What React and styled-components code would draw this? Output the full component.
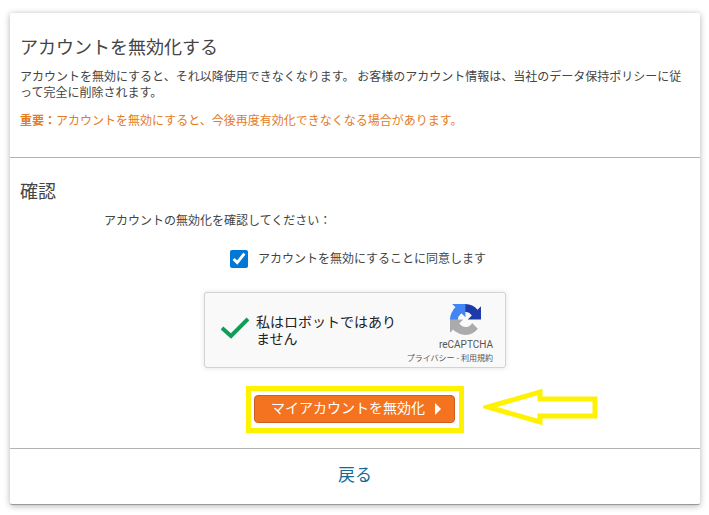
import { useState } from 'react';
import styled, { createGlobalStyle } from 'styled-components';

const App = () => {
  const [agreed, setAgreed] = useState(true);

  return (
    <>
      <GlobalStyle />
      <Card>
        <Section>
          <Title>アカウントを無効化する</Title>
          <Description>
            アカウントを無効にすると、それ以降使用できなくなります。 お客様のアカウント情報は、当社のデータ保持ポリシーに従って完全に削除されます。
          </Description>
          <Warning>
            <strong>重要：</strong>アカウントを無効にすると、今後再度有効化できなくなる場合があります。
          </Warning>
        </Section>
        <ConfirmSection>
          <Title>確認</Title>
          <ConfirmText>アカウントの無効化を確認してください：</ConfirmText>
          <AgreeRow>
            <AgreeCheckbox id="agree" type="checkbox" checked={agreed} onChange={(e) => setAgreed(e.target.checked)} />
            <AgreeLabel htmlFor="agree">アカウントを無効にすることに同意します</AgreeLabel>
          </AgreeRow>
          <Captcha />
          <Highlight>
            <SubmitButton type="button">
              <ButtonText>マイアカウントを無効化</ButtonText>
              <svg width="6" height="12" viewBox="0 0 6 12" aria-hidden="true">
                <path d="M0 0L6 6L0 12Z" fill="#ffffff" />
              </svg>
            </SubmitButton>
            <PointerArrow viewBox="0 0 116 38" aria-hidden="true">
              <path d="M5 19L57 4V11H112V28H57V34Z" fill="none" stroke="#fff200" strokeWidth="5" />
            </PointerArrow>
          </Highlight>
        </ConfirmSection>
        <Footer>
          <BackLink href="#">戻る</BackLink>
        </Footer>
      </Card>
    </>
  );
};

const Captcha = () => (
  <CaptchaBox>
    <CheckMark viewBox="0 0 28 22" aria-hidden="true">
      <path d="M1 11L10 19L27 2" fill="none" stroke="#0f9d58" strokeWidth="4" />
    </CheckMark>
    <CaptchaText>私はロボットではありません</CaptchaText>
    <CaptchaBrand>
      <BrandLogo>
        <svg width="31" height="31" viewBox="0 0 64 64" aria-hidden="true">
          <path
            fill="#1c3aa9"
            d="M64 31.955l-.033-1.37V4.687l-7.16 7.16C50.948 4.674 42.033.093 32.05.093c-10.4 0-19.622 4.96-25.458 12.64l11.736 11.86a15.55 15.55 0 0 1 4.754-5.334c2.05-1.6 4.952-2.906 8.968-2.906.485 0 .86.057 1.135.163 4.976.393 9.288 3.14 11.828 7.124l-8.307 8.307L64 31.953"
          />
          <path
            fill="#4285f4"
            d="M31.862.094l-1.37.033H4.594l7.16 7.16C4.58 13.147 0 22.06 0 32.046c0 10.4 4.96 19.622 12.64 25.458L24.5 45.768a15.55 15.55 0 0 1-5.334-4.754c-1.6-2.05-2.906-4.952-2.906-8.968 0-.485.057-.86.163-1.135.393-4.976 3.14-9.288 7.124-11.828l8.307 8.307L31.86.095"
          />
          <path
            fill="#ababab"
            d="M.001 32.045l.033 1.37v25.898l7.16-7.16c5.86 7.173 14.774 11.754 24.76 11.754 10.4 0 19.622-4.96 25.458-12.64l-11.736-11.86a15.55 15.55 0 0 1-4.754 5.334c-2.05 1.6-4.952 2.906-8.968 2.906-.485 0-.86-.057-1.135-.163-4.976-.393-9.288-3.14-11.828-7.124l8.307-8.307c-10.522.04-22.4.066-27.295-.005"
          />
        </svg>
        <BrandName>reCAPTCHA</BrandName>
      </BrandLogo>
      <BrandLinks>
        <a href="#">プライバシー</a> - <a href="#">利用規約</a>
      </BrandLinks>
    </CaptchaBrand>
  </CaptchaBox>
);

export default App;

const GlobalStyle = createGlobalStyle`
  * {
    box-sizing: border-box;
  }

  body {
    margin: 0;
    background-color: #ffffff;
    color: #444444;
    font-family: 'Noto Sans CJK JP', sans-serif;
    font-size: 12px;
    line-height: 16px;
  }
`;

const Card = styled.main`
  margin: 13px 9px 10px 10px;
  background-color: #ffffff;
  border-bottom: 1px solid #999999;
  border-radius: 2px;
  box-shadow: 0 1px 6px rgba(0, 0, 0, 0.3);
`;

const Section = styled.section`
  padding: 21px 10px 29px;
  border-bottom: 1px solid #b3b3b3;
`;

const ConfirmSection = styled(Section)`
  display: flex;
  flex-direction: column;
  padding-top: 20px;
  padding-bottom: 15px;
`;

const Title = styled.h2`
  margin: 0 0 10px;
  font-weight: 400;
  font-size: 18px;
  line-height: 24px;
`;

const Description = styled.p`
  margin: 0 0 12px;
`;

const Warning = styled.p`
  margin: 0;
  color: #e47b25;
`;

const ConfirmText = styled.p`
  margin: 0 0 22px 84px;
`;

const AgreeRow = styled.div`
  display: flex;
  align-items: flex-start;
  align-self: center;
  gap: 10px;
  padding-left: 6px;
  margin-bottom: 24px;
`;

const AgreeCheckbox = styled.input`
  width: 18px;
  height: 18px;
  margin: 0;
  accent-color: #0078d7;
`;

const AgreeLabel = styled.label`
  line-height: 16px;
`;

const CaptchaBox = styled.div`
  display: flex;
  align-items: center;
  align-self: center;
  width: 302px;
  height: 76px;
  padding: 0 12px 0 16px;
  margin-bottom: 18px;
  background-color: #f9f9f9;
  border: 1px solid #d3d3d3;
  border-radius: 3px;
  box-shadow: 0 0 4px 1px rgba(0, 0, 0, 0.08);
`;

const CheckMark = styled.svg`
  flex: none;
  width: 28px;
  height: 22px;
  margin-bottom: 4px;
`;

const CaptchaText = styled.span`
  width: 142px;
  margin-left: 7px;
  color: #222222;
  font-size: 14px;
  line-height: 17px;
`;

const CaptchaBrand = styled.div`
  display: flex;
  flex-direction: column;
  align-items: flex-end;
  flex: none;
  align-self: flex-end;
  padding-bottom: 3px;
  margin-left: auto;
  color: #555555;
`;

const BrandLogo = styled.div`
  display: flex;
  flex-direction: column;
  align-items: center;
`;

const BrandName = styled.span`
  margin-top: 3px;
  font-family: Roboto, sans-serif;
  font-size: 10px;
  line-height: 14px;
`;

const BrandLinks = styled.span`
  font-size: 8px;
  line-height: 12px;
  white-space: nowrap;

  a {
    color: inherit;
    text-decoration: none;
  }
`;

const Highlight = styled.div`
  position: relative;
  align-self: center;
  padding: 4px 4px 5px 3px;
  border: 5px solid #fff200;
`;

const SubmitButton = styled.button`
  display: flex;
  align-items: center;
  gap: 10px;
  height: 28px;
  padding: 0 13px 0 16px;
  background-color: #f47321;
  border: 1px solid #cf5c25;
  border-radius: 4px;
  color: #ffffff;
  font-family: inherit;
  font-size: 14px;
  line-height: 20px;
  cursor: pointer;
`;

const ButtonText = styled.span`
  padding-bottom: 4px;
`;

/* hand-drawn style pointer that sits outside of the highlighted button */
const PointerArrow = styled.svg`
  position: absolute;
  top: -3px;
  left: calc(100% + 24px);
  width: 116px;
  height: 38px;
`;

const Footer = styled.footer`
  padding: 13px 10px 18px;
  text-align: center;
`;

const BackLink = styled.a`
  color: #146a93;
  font-size: 17px;
  line-height: 24px;
  text-decoration: none;
`;
